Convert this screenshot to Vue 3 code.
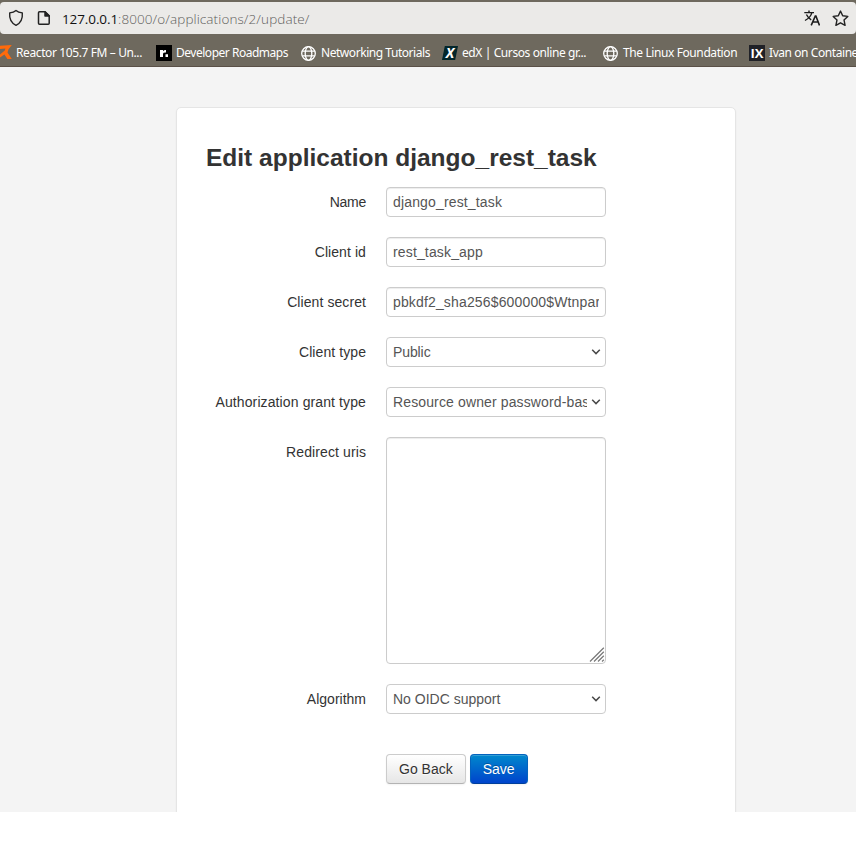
<script setup>
const bookmarks = [
  { icon: 'reactor', label: 'Reactor 105.7 FM – Un...', spacing: -0.39 },
  { icon: 'roadmap', label: 'Developer Roadmaps', spacing: -0.48 },
  { icon: 'globe', label: 'Networking Tutorials', spacing: -0.45 },
  { icon: 'edx', label: 'edX | Cursos online gr...', spacing: -0.4 },
  { icon: 'globe', label: 'The Linux Foundation', spacing: -0.4 },
  { icon: 'ivan', label: 'Ivan on Containers', spacing: -0.43 }
]

const fields = [
  { label: 'Name', kind: 'input', value: 'django_rest_task', labelSpacing: -0.25, spacing: 0.15 },
  { label: 'Client id', kind: 'input', value: 'rest_task_app', labelSpacing: 0.08, spacing: 0.15 },
  { label: 'Client secret', kind: 'input', value: 'pbkdf2_sha256$600000$Wtnpar', labelSpacing: 0.08, spacing: 0.15 },
  { label: 'Client type', kind: 'select', value: 'Public', labelSpacing: 0.08, spacing: -0.1 },
  { label: 'Authorization grant type', kind: 'select', value: 'Resource owner password-based', labelSpacing: 0.11, spacing: 0.13 },
  { label: 'Redirect uris', kind: 'textarea', value: '', labelSpacing: 0.1, spacing: 0 },
  { label: 'Algorithm', kind: 'select', value: 'No OIDC support', labelSpacing: 0, spacing: 0 }
]
</script>

<template>
  <div class="window">
    <header class="toolbar">
      <div class="address">
        <svg class="shield" width="16" height="18" viewBox="0 0 16 18" fill="none" stroke="#222" stroke-width="1.4" stroke-linejoin="round">
          <path d="M8 1.5C6.7 2.6 4 3.6 1.7 3.9C1.2 9.6 3 14 8 16.3C13 14 14.8 9.6 14.3 3.9C12 3.6 9.3 2.6 8 1.5Z" />
        </svg>
        <svg class="doc" width="14" height="16" viewBox="0 0 14 16" fill="none" stroke="#222" stroke-width="1.5" stroke-linejoin="round">
          <path d="M2.5 1.7H8L12.2 5.9V13.3Q12.2 14.3 11.2 14.3H2.5Q1.5 14.3 1.5 13.3V2.7Q1.5 1.7 2.5 1.7Z" />
          <path d="M8 1.7V6H12.2Z" fill="#222" />
        </svg>
        <span class="url"><b>127.0.0.1</b>:8000/o/applications/2/update/</span>
        <svg class="translate" width="16" height="16" viewBox="0 0 16 16" fill="none" stroke="#1c1c1c" stroke-width="1.4">
          <path d="M0.3 2.6H10M5 0.5V2.6M7.9 2.6C7 6 4.5 8.6 1 10.5M2.4 4.5C3.6 7 5.2 8.6 7.2 9.8" />
          <path d="M7.2 15.4L11.3 6H11.9L15.5 15.4M8.7 12H14" stroke-width="1.6" />
        </svg>
        <svg class="star" width="17" height="17" viewBox="0 0 17 17" fill="none" stroke="#222" stroke-width="1.4" stroke-linejoin="round">
          <path d="M8.5 1.1L10.7 5.8L15.8 6.4L12 9.9L13.1 15.3L8.5 12.8L3.9 15.3L5 9.9L1.2 6.4L6.3 5.8Z" />
        </svg>
      </div>
      <nav class="bookmarks">
        <a v-for="b in bookmarks" :key="b.label" class="bookmark">
          <svg class="favicon" width="16" height="16" viewBox="0 0 16 16">
            <g v-if="b.icon === 'reactor'" fill="#ff6a0a">
              <path d="M4 0.8L15.8 0L12.5 4.2L11.5 7.4L15.8 14H11.4L8.4 9.6L4 12.4V9.4L8.8 5.4L9.4 3.6L4 4Z" />
            </g>
            <g v-else-if="b.icon === 'roadmap'">
              <rect width="16" height="16" />
              <path d="M4 5H7V6.3Q8 4.8 10 5V7.6Q7 7.4 7 9V12H4ZM9.5 9.3H12V12H9.5Z" fill="#fff" />
            </g>
            <g v-else-if="b.icon === 'globe'" fill="none" stroke="#fff" stroke-width="1.3">
              <circle cx="7.5" cy="8.5" r="6.8" />
              <ellipse cx="7.5" cy="8.5" rx="3.3" ry="6.8" />
              <path d="M1.2 6.2H13.8M1.2 10.8H13.8" />
            </g>
            <g v-else-if="b.icon === 'edx'">
              <path d="M2.8 1H16L13.2 15H0Z" fill="#02262b" />
              <text class="mark slanted" x="8" y="12.8" text-anchor="middle">X</text>
            </g>
            <g v-else>
              <rect width="16" height="16" fill="#202127" />
              <text class="mark" x="8" y="12.8" text-anchor="middle">IX</text>
            </g>
          </svg>
          <span class="caption" :style="{ letterSpacing: b.spacing + 'px' }">{{ b.label }}</span>
        </a>
      </nav>
    </header>

    <main class="page">
      <section class="card">
        <h3 class="title">Edit application django_rest_task</h3>
        <div v-for="f in fields" :key="f.label" class="group">
          <label class="label" :style="{ letterSpacing: f.labelSpacing + 'px' }">{{ f.label }}</label>
          <div class="control" :class="f.kind">
            <span class="value" :style="{ letterSpacing: f.spacing + 'px' }">{{ f.value }}</span>
            <svg v-if="f.kind === 'select'" class="chevron" width="10" height="6" viewBox="0 0 10 6" fill="none" stroke="#484848" stroke-width="1.5">
              <path d="M1.2 0.8L5 4.6L8.8 0.8" />
            </svg>
            <svg v-if="f.kind === 'textarea'" class="grip" width="16" height="16" viewBox="0 0 16 16" fill="none" stroke="#777" stroke-width="1.2">
              <path d="M1 14.5L14.8 0.8M5 14.5L14.8 4.8M9 14.5L14.8 8.8M13 14.5L14.8 12.8" />
            </svg>
          </div>
        </div>
        <div class="actions">
          <button class="btn" type="button">Go Back</button>
          <button class="btn primary" type="button">Save</button>
        </div>
      </section>
    </main>
  </div>
</template>

<style>
body {
  margin: 0;
  background: #fff;
}
</style>

<style scoped>
* {
  box-sizing: border-box;
}
.window {
  width: 856px;
  height: 854px;
  overflow: hidden;
  font: 14px/20px "Liberation Sans", Arial, sans-serif;
  color: #333;
}
.toolbar {
  height: 67px;
  padding-top: 2px;
  background: #6e695e;
  border-bottom: 1px solid #5a5047;
  overflow: hidden;
}
.address {
  display: flex;
  align-items: center;
  height: 32px;
  padding: 0 7px 0 8px;
  border-radius: 4px;
  background: #ebeae8;
}
.doc {
  margin-left: 13px;
}
.url {
  flex: 1;
  margin: 2px 0 0 11px;
  font: 300 13.5px/20px "Open Sans", "Noto Sans", sans-serif;
  letter-spacing: 0.1px;
  color: #5f5e5c;
  white-space: nowrap;
}
.url b {
  font-weight: 400;
  letter-spacing: -0.1px;
  color: #111;
}
.star {
  margin-left: 12px;
}
.bookmarks {
  display: grid;
  grid-template-columns: 160px 145px 141px 161px 146px 160px;
  margin: 10px 0 0 -4px;
}
.bookmark {
  display: flex;
  align-items: center;
  gap: 4px;
  height: 17px;
  color: #fff;
}
.favicon {
  flex: none;
}
.mark {
  font: bold 13px "Open Sans", sans-serif;
  fill: #fff;
}
.slanted {
  font-size: 14px;
  font-style: italic;
}
.caption {
  font: 12px/17px "Noto Sans", sans-serif;
  white-space: nowrap;
}
.page {
  height: 745px;
  padding-top: 40px;
  background: #f4f4f4;
  overflow: hidden;
}
.card {
  width: 560px;
  height: 760px;
  margin-left: 176px;
  padding: 29px;
  border: 1px solid #e5e5e5;
  border-radius: 5px;
  background: #fff;
  box-shadow: 0 1px 2px rgba(0, 0, 0, 0.05);
}
.title {
  margin: 0 0 9px;
  padding-top: 1px;
  font-size: 24.5px;
  line-height: 40px;
  font-weight: 700;
  white-space: nowrap;
}
.group {
  display: flex;
  gap: 20px;
  margin-bottom: 20px;
}
.label {
  width: 160px;
  padding-top: 5px;
  text-align: right;
  white-space: nowrap;
}
.control {
  position: relative;
  display: flex;
  align-items: center;
  width: 220px;
  height: 30px;
  padding: 0 6px;
  border: 1px solid #ccc;
  border-radius: 4px;
  background: #fff;
  color: #555;
}
.input,
.textarea {
  box-shadow: inset 0 1px 1px rgba(0, 0, 0, 0.075);
}
.textarea {
  height: 227px;
}
.value {
  flex: 1;
  overflow: hidden;
  white-space: nowrap;
}
.select {
  padding-right: 4px;
}
.chevron {
  margin-left: 4px;
}
.grip {
  position: absolute;
  right: 0;
  bottom: 0;
}
.actions {
  display: flex;
  gap: 4px;
  margin: 40px 0 0 180px;
}
.btn {
  height: 30px;
  padding: 4px 12px;
  border: 1px solid #ccc;
  border-bottom-color: #b3b3b3;
  border-radius: 4px;
  background: linear-gradient(#fff, #e6e6e6);
  box-shadow: inset 0 1px 0 rgba(255, 255, 255, 0.2), 0 1px 2px rgba(0, 0, 0, 0.05);
  font: inherit;
  color: #333;
  text-shadow: 0 1px 1px rgba(255, 255, 255, 0.75);
}
.primary {
  border-color: #0463bd #0463bd #003f9b;
  background: linear-gradient(#0088cc, #0044cc);
  color: #fff;
  text-shadow: 0 -1px 0 rgba(0, 0, 0, 0.25);
}
</style>
